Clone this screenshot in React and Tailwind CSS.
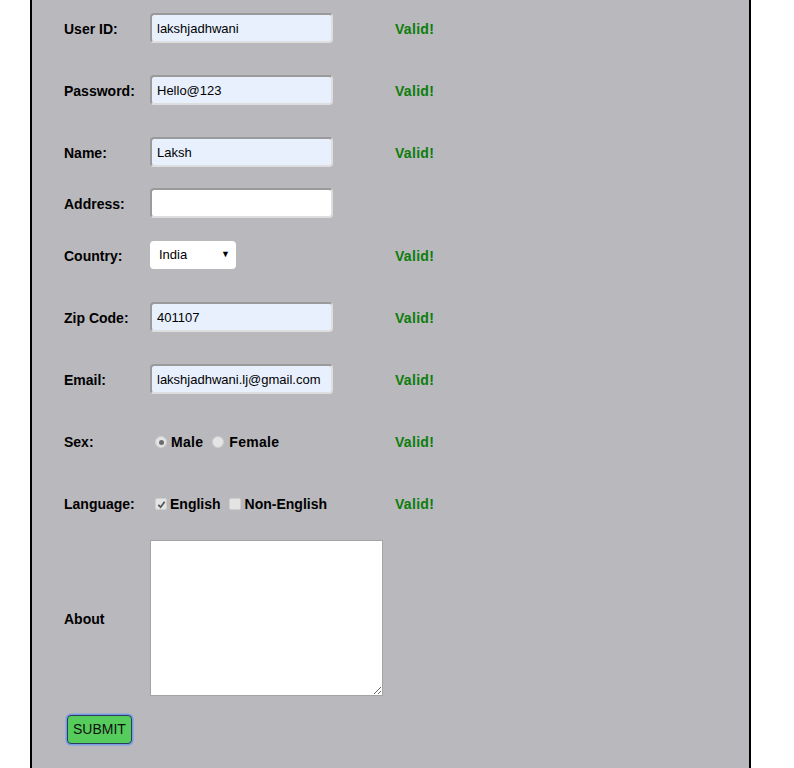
import React from "react";

const label = "w-[86px] shrink-0 pt-[2px] font-bold text-[14px] text-black";
const valid = "ml-[62px] pt-[2px] font-bold text-[14px] tracking-[0.3px] text-[#0b7d0b]";
const field =
  "w-[183px] h-[30px] rounded-[4px] border-2 border-t-[#9a9a9a] border-l-[#9a9a9a] border-b-[#dedede] border-r-[#dedede] px-[5px] text-[13px] text-black outline-none";

function Row({ name, children, ok = true, className = "" }) {
  return (
    <div className={`flex items-center h-[30px] ${className}`}>
      <span className={label}>{name}</span>
      <div className="w-[183px] shrink-0 flex items-center">{children}</div>
      {ok && <span className={valid}>Valid!</span>}
    </div>
  );
}

function Radio({ on }) {
  return (
    <span className="w-[12px] h-[12px] rounded-full bg-[#e4e4e4] border border-[#cfcfcf] flex items-center justify-center">
      {on && <span className="w-[5px] h-[5px] rounded-full bg-[#6b6b6b]" />}
    </span>
  );
}

function Check({ on }) {
  return (
    <span className="w-[12px] h-[12px] rounded-[2px] bg-[#e4e4e4] border border-[#cfcfcf] flex items-center justify-center">
      {on && (
        <svg width="9" height="9" viewBox="0 0 10 10">
          <path d="M1.5 5.5 L4 8 L8.5 2" stroke="#555" strokeWidth="2" fill="none" />
        </svg>
      )}
    </span>
  );
}

export default function App() {
  return (
    <div className="bg-white min-h-[768px] font-['Liberation_Sans',Arial,sans-serif]">
      <div className="ml-[30px] w-[721px] min-h-[768px] bg-[#b9b8bc] border-x-2 border-black pl-[32px] pt-[13px] pb-[24px]">
        <Row name="User ID:">
          <input className={`${field} bg-[#e8f0fe]`} defaultValue="lakshjadhwani" />
        </Row>
        <Row name="Password:" className="mt-[32px]">
          <input className={`${field} bg-[#e8f0fe]`} defaultValue="Hello@123" />
        </Row>
        <Row name="Name:" className="mt-[32px]">
          <input className={`${field} bg-[#e8f0fe]`} defaultValue="Laksh" />
        </Row>
        <Row name="Address:" ok={false} className="mt-[21px]">
          <input className={`${field} bg-white`} defaultValue="" />
        </Row>
        <Row name="Country:" className="mt-[22px]">
          <div className="w-[86px] h-[28px] rounded-[4px] bg-white flex items-center justify-between pl-[9px] pr-[6px] text-[13px] text-black">
            <span>India</span>
            <span className="text-[9px]">▼</span>
          </div>
        </Row>
        <Row name="Zip Code:" className="mt-[32px]">
          <input className={`${field} bg-[#e8f0fe]`} defaultValue="401107" />
        </Row>
        <Row name="Email:" className="mt-[32px]">
          <input className={`${field} bg-[#e8f0fe]`} defaultValue="lakshjadhwani.lj@gmail.com" />
        </Row>
        <Row name="Sex:" className="mt-[32px]">
          <div className="flex items-center pl-[5px] pt-[2px] font-bold text-[14px] tracking-[0.3px] text-black">
            <Radio on />
            <span className="ml-[4px]">Male</span>
            <span className="ml-[9px]"><Radio /></span>
            <span className="ml-[5px]">Female</span>
          </div>
        </Row>
        <div className="flex items-center h-[30px] mt-[32px]">
          <span className={label}>Language:</span>
          <div className="w-[183px] shrink-0 flex items-center pl-[5px] pt-[2px] font-bold text-[14px] text-black whitespace-nowrap">
            <Check on />
            <span className="ml-[3px]">English</span>
            <span className="ml-[8px]"><Check /></span>
            <span className="ml-[4px]">Non-English</span>
          </div>
          <span className={valid}>Valid!</span>
        </div>
        <div className="flex items-center mt-[22px]">
          <span className={label}>About</span>
          <textarea className="w-[233px] h-[156px] bg-white border border-[#a3a3a3] outline-none" />
        </div>
        <button className="mt-[19px] ml-[3px] h-[29px] px-[5px] rounded-[4px] bg-[#55cc5c] border border-[#2b3d5c] ring-[1.5px] ring-[#7b9be6] text-[14px] text-[#111]">
          SUBMIT
        </button>
      </div>
    </div>
  );
}
